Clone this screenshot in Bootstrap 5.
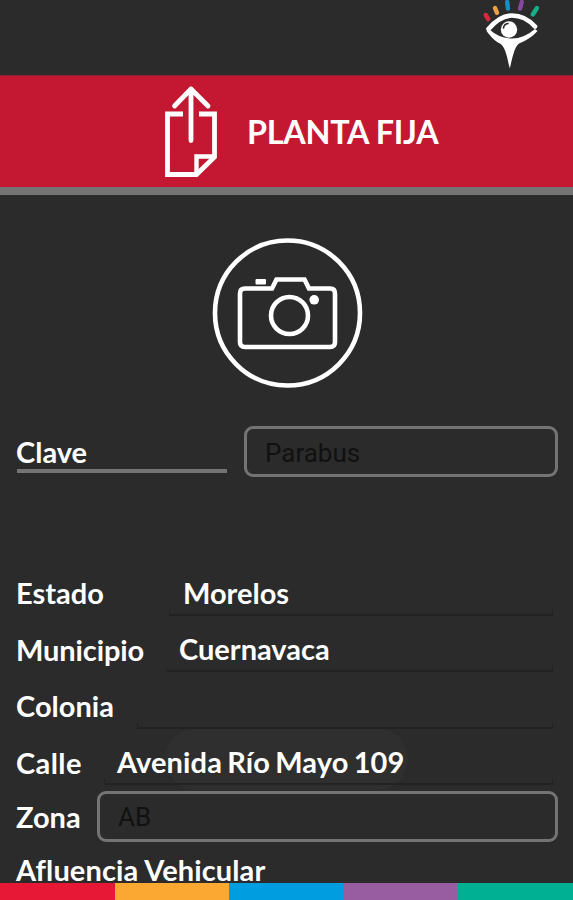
<!DOCTYPE html>
<html lang="es">
<head>
<meta charset="utf-8">
<meta name="viewport" content="width=device-width, initial-scale=1">
<title>Planta fija</title>
<link href="https://cdn.jsdelivr.net/npm/bootstrap@5.3.0/dist/css/bootstrap.min.css" rel="stylesheet">
<style>
body{background:#2b2b2b;color:#fff;font-family:Lato,sans-serif;font-weight:700;font-size:29px;line-height:1.2}
.screen{height:900px}
.topbar{height:75px;padding-right:29px}
.titlebar{height:120px;background:#c41832;border-bottom:8px solid #747474;padding-left:160px;border-top:1px solid #8a2234}
.titlebar h1{font-size:32.4px;font-weight:700;margin:2px 0 0 25px;letter-spacing:-.3px}
.photo{height:231px;padding-top:41px}
.photo svg{margin-left:2px}
.clave{height:51px;gap:17px}
.clave-label{width:210px;height:47px;border-bottom:4px solid #747474;line-height:52px}
.boxed{border:3px solid #747474;border-radius:9px;height:51px;color:#111;font-family:Roboto,sans-serif;font-weight:400;font-size:26px;padding:4px 0 0 18px}
.form-area{padding:0 15px 0 17px;min-height:0}
.field-label{flex-shrink:0;margin-left:-1px}
.fields{margin-top:87.5px}
.field{height:56.5px}
.field .field-label{padding-top:2px}
.value{height:46px;border-bottom:2px solid #222;margin-right:5px;position:relative;line-height:45px}
.value::after,.value::before{content:"";position:absolute;bottom:0;width:1px;height:4px;background:#222}
.value::after{right:0}.value::before{left:0}
.w-estado{width:153px}.v-estado{padding-left:14px}
.w-municipio{width:150px;letter-spacing:-.1px}.v-municipio{padding-left:13px}
.w-colonia{width:121px}
.w-calle{width:88px;letter-spacing:.4px}.v-calle{padding-left:13px;word-spacing:-2px;letter-spacing:.12px}
.w-zona{width:81px;padding-top:2px}
.zona{height:51px}
.afluencia{margin:11px 0 0 -1px;letter-spacing:.1px}
.toast-ghost{position:absolute;left:165px;top:728px;width:243px;height:62px;border-radius:31px;background:#2f2f2f}
.stripe{height:17px}
.stripe>div{flex:1}
.c1{background:#e71836}.c2{background:#faa832}.c3{background:#009de0}.c4{background:#985ca1}.c5{background:#00b093}
</style>
</head>
<body>
<div class="screen position-relative overflow-hidden d-flex flex-column">
  <div class="toast-ghost"></div>
  <header class="topbar d-flex justify-content-end flex-shrink-0">
    <svg width="64" height="75" viewBox="480 0 64 75" fill="none" stroke-linecap="round">
      <g stroke-width="4.4">
        <path d="M485.800 15l2.400 4" stroke="#d8283c"/><path d="M495 8l2 4.800" stroke="#efa044"/><path d="M507.200 2l.7 6.500" stroke="#178fc5"/><path d="M521.800 2l-1.700 6.500" stroke="#8549a0"/><path d="M537 8l-4.200 6.500" stroke="#15b087"/>
      </g>
      <path d="M488.500 29Q500 15.500 512 15.500Q525 15.500 535 26.500" stroke="#fff" stroke-width="4.600"/>
      <path d="M486.500 31C491 37 496 42 500 43.500C506 47 507.500 60 509.800 68.500C512 60 514 47 519 43.500C526 41 532 37 537.500 31L535 29Q524 38.500 512 38.500Q499 38.500 489 29Z" fill="#fff"/>
      <circle cx="509" cy="29.500" r="8.200" fill="#fff"/>
      <path d="M503.500 28q.5-4 4.500-4.500" stroke="#2b2b2b" stroke-width="1.600"/>
    </svg>
  </header>
  <div class="titlebar d-flex align-items-center flex-shrink-0">
    <svg width="62" height="112" viewBox="160 75 62 112" fill="none" stroke="#fff" stroke-width="4.800">
      <path d="M183 113H167.500V173.500H196.500L214.500 156V113H199"/>
      <path d="M191 139.500V88M174.500 105L191 88L208 105" stroke-linecap="round" stroke-linejoin="round"/>
      <path d="M196.500 173V155.500H214.500" stroke-width="4.400"/>
    </svg>
    <h1>PLANTA FIJA</h1>
  </div>
  <div class="photo text-center flex-shrink-0">
    <svg width="154" height="154" viewBox="211 236 154 154" fill="none" stroke="#fff" stroke-width="4.600">
      <circle cx="287.500" cy="313" r="72.500"/>
      <path d="M245 288.500H272L276.500 279.500H304.500L309 288.500H330Q335 288.500 335 293.500V342Q335 347 330 347H245Q240 347 240 342V293.500Q240 288.500 245 288.500Z"/>
      <circle cx="289.500" cy="315.500" r="18.500"/>
      <circle cx="314.200" cy="299.800" r="4.800" fill="#fff" stroke="none"/>
      <rect x="255.500" y="279" width="10.500" height="5.500" rx="1" fill="#fff" stroke="none"/>
    </svg>
  </div>
  <main class="form-area position-relative flex-grow-1 d-flex flex-column">
    <div class="clave d-flex">
      <div class="clave-label"><span class="field-label">Clave</span></div>
      <div class="boxed flex-grow-1 d-flex align-items-center">Parabus</div>
    </div>
    <div class="fields">
      <div class="field d-flex align-items-center"><span class="field-label w-estado">Estado</span><div class="value v-estado flex-grow-1">Morelos</div></div>
      <div class="field d-flex align-items-center"><span class="field-label w-municipio">Municipio</span><div class="value v-municipio flex-grow-1">Cuernavaca</div></div>
      <div class="field d-flex align-items-center"><span class="field-label w-colonia">Colonia</span><div class="value flex-grow-1"></div></div>
      <div class="field d-flex align-items-center"><span class="field-label w-calle">Calle</span><div class="value v-calle flex-grow-1">Avenida Río Mayo 109</div></div>
      <div class="zona d-flex align-items-center"><span class="field-label w-zona">Zona</span><div class="boxed flex-grow-1 d-flex align-items-center">AB</div></div>
      <div class="afluencia">Afluencia Vehicular</div>
    </div>
  </main>
  <footer class="stripe d-flex flex-shrink-0 position-relative mt-auto">
    <div class="c1"></div><div class="c2"></div><div class="c3"></div><div class="c4"></div><div class="c5"></div>
  </footer>
</div>
<script src="https://cdn.jsdelivr.net/npm/bootstrap@5.3.0/dist/js/bootstrap.bundle.min.js"></script>
</body>
</html>
